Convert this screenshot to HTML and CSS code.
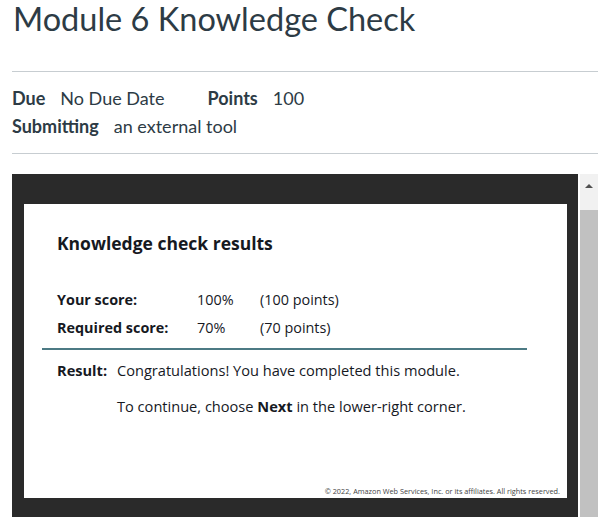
FILE: index.html
```html
<!DOCTYPE html>
<html>
<head>
<meta charset="utf-8">
<link rel="stylesheet" href="styles.css">
</head>
<body>
<div class="page">
  <h1 class="title">Module 6 Knowledge Check</h1>
  <div class="details">
    <div class="row">
      <span class="label">Due</span><span class="value">No Due Date</span>
      <span class="label label-gap">Points</span><span class="value">100</span>
    </div>
    <div class="row">
      <span class="label">Submitting</span><span class="value">an external tool</span>
    </div>
  </div>
  <div class="frame">
    <div class="tool">
      <div class="panel">
        <h2 class="panel-title">Knowledge check results</h2>
        <div class="scores">
          <div class="score-row"><span class="s-label">Your score:</span><span class="s-pct">100%</span><span>(100 points)</span></div>
          <div class="score-row"><span class="s-label">Required score:</span><span class="s-pct">70%</span><span>(70 points)</span></div>
        </div>
        <div class="result">
          <div class="result-row"><span class="r-label">Result:</span><span>Congratulations! You have completed this module.</span></div>
          <div class="result-row"><span class="r-label"></span><span>To continue, choose <b>Next</b> in the lower-right corner.</span></div>
        </div>
        <div class="copy">© 2022, Amazon Web Services, Inc. or its affiliates. All rights reserved.</div>
      </div>
    </div>
    <div class="scrollbar">
      <div class="sb-btn"><span class="sb-arrow"></span></div>
      <div class="sb-thumb"></div>
    </div>
  </div>
</div>
</body>
</html>
```
FILE: styles.css
```css
html, body {
  margin: 0;
  padding: 0;
  background: #fff;
  height: 517px;
  overflow: hidden;
}
.page {
  padding: 0 4px 0 12px;
  font-family: Lato, "Liberation Sans", sans-serif;
  color: #2d3b45;
}
.title {
  margin: 0;
  padding: 0 0 0 1px;
  font-size: 32.5px;
  font-weight: 400;
  line-height: 38px;
  height: 72px;
  border-bottom: 1px solid #c7cdd1;
  box-sizing: border-box;
}
.details {
  padding: 12px 0 13px;
  border-bottom: 1px solid #c7cdd1;
  font-size: 18px;
  line-height: 28px;
}
.row { display: flex; align-items: baseline; }
.label { font-weight: 700; margin-right: 15px; }
.label-gap { margin-left: 43px; }
.frame {
  margin-top: 20px;
  display: flex;
  width: 586px;
}
.tool {
  width: 566px;
  background: #2a2a2a;
  padding: 30px 11px 20px 12px;
  box-sizing: border-box;
}
.panel {
  background: #fff;
  height: 294px;
  box-sizing: border-box;
  padding: 28px 0 0 0;
  font-family: "Open Sans", "Noto Sans", sans-serif;
  color: #16191f;
  position: relative;
}
.panel-title {
  margin: 0 0 0 33px;
  font-size: 17.5px;
  font-weight: 700;
  line-height: 22px;
}
.scores {
  margin: 32px 0 0 33px;
  font-size: 14.4px;
  line-height: 28px;
}
.score-row { display: flex; }
.s-label { width: 140px; font-weight: 700; }
.s-pct { width: 63px; }
.result {
  margin: 6px 40px 0 18px;
  border-top: 2px solid #4c7a84;
  padding: 2px 0 0 15px;
  font-size: 14.6px;
  line-height: 36px;
}
.result-row { display: flex; }
.r-label { width: 60px; font-weight: 700; }
.copy {
  position: absolute;
  right: 7px;
  bottom: 2px;
  font-size: 7.3px;
  color: #444;
}
.scrollbar {
  width: 18px;
  margin-left: 2px;
  background: #c1c1c1;
  display: flex;
  flex-direction: column;
}
.sb-btn {
  height: 36px;
  background: #f1f1f1;
  display: flex;
  justify-content: center;
  padding-top: 10px;
  box-sizing: border-box;
}
.sb-arrow {
  width: 0;
  height: 0;
  border-left: 4px solid transparent;
  border-right: 4px solid transparent;
  border-bottom: 4px solid #505050;
}
.sb-thumb { flex: 1; }
```
